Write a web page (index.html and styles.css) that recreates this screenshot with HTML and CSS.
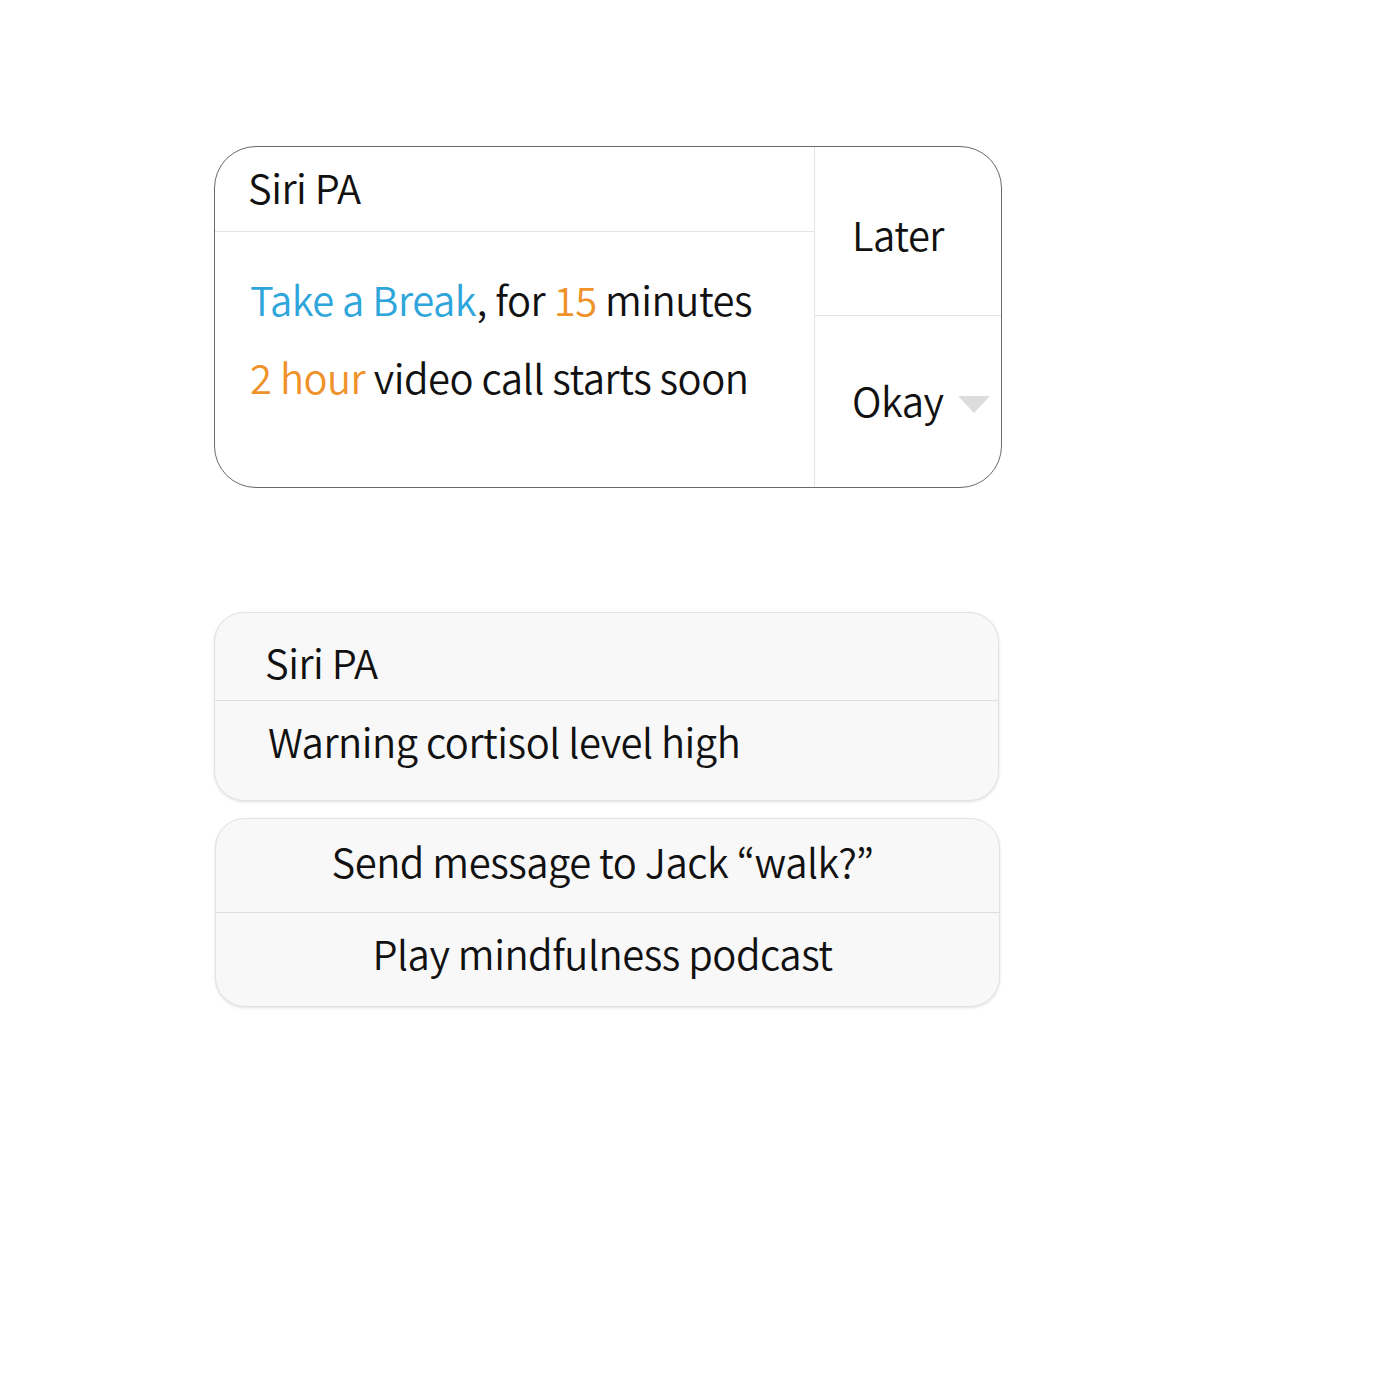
FILE: index.html
```html
<!DOCTYPE html>
<html>
<head>
<meta charset="utf-8">
<link rel="stylesheet" href="styles.css">
</head>
<body>
<div class="page">
  <div class="alert">
    <div class="alert-main">
      <div class="alert-title">Siri PA</div>
      <div class="alert-body">
        <div class="line"><span class="blue">Take a Break</span>, for <span class="orange">15</span> minutes</div>
        <div class="line"><span class="orange">2 hour</span> video call starts soon</div>
      </div>
    </div>
    <div class="alert-actions">
      <div class="action action-later">Later</div>
      <div class="action action-okay">Okay <span class="caret"></span></div>
    </div>
  </div>

  <div class="sheet sheet-warning">
    <div class="sheet-title">Siri PA</div>
    <div class="sheet-text">Warning cortisol level high</div>
  </div>

  <div class="sheet sheet-options">
    <div class="option">Send message to Jack “walk?”</div>
    <div class="option">Play mindfulness podcast</div>
  </div>
</div>
</body>
</html>
```

FILE: styles.css
```css
html, body {
  margin: 0;
  padding: 0;
  background: #ffffff;
}
body {
  font-family: "Noto Sans CJK KR", "Noto Sans", sans-serif;
  font-weight: 350;
  letter-spacing: -0.5px;
  color: #111;
  width: 1400px;
  height: 1400px;
}
.page {
  padding: 146px 0 0 214px;
  display: flex;
  flex-direction: column;
  align-items: flex-start;
}
.alert {
  width: 788px;
  height: 342px;
  border: 1px solid #6a6a6a;
  border-radius: 42px;
  display: flex;
  box-sizing: border-box;
  overflow: hidden;
}
.alert-main {
  width: 599px;
  border-right: 1px solid #e3e3e3;
  display: flex;
  flex-direction: column;
}
.alert-title {
  height: 85px;
  border-bottom: 1px solid #e3e3e3;
  font-size: 40px;
  line-height: 80px;
  padding-left: 33px;
  box-sizing: border-box;
}
.alert-body {
  padding: 39px 0 0 35px;
  display: flex;
  flex-direction: column;
  gap: 22px;
}
.line {
  font-size: 40px;
  line-height: 56px;
  white-space: nowrap;
}
.blue { color: #2ea6dc; }
.orange { color: #f0922a; }
.alert-actions {
  flex: 1;
  display: flex;
  flex-direction: column;
}
.action {
  font-size: 40px;
  padding-left: 37px;
  display: flex;
  align-items: center;
  box-sizing: border-box;
}
.action-later {
  height: 169px;
  border-bottom: 1px solid #e3e3e3;
  padding-top: 6px;
}
.action-okay {
  flex: 1;
  padding-bottom: 4px;
}
.caret {
  display: inline-block;
  width: 0;
  height: 0;
  margin-left: 14px;
  margin-top: 10px;
  border-left: 16px solid transparent;
  border-right: 16px solid transparent;
  border-top: 17px solid #dcdcdc;
}
.sheet {
  width: 785px;
  background: #f8f8f8;
  border: 1px solid #e2e2e2;
  border-radius: 30px;
  box-shadow: 0 1px 3px rgba(0,0,0,0.12);
  box-sizing: border-box;
  overflow: hidden;
}
.sheet-warning {
  margin-top: 124px;
  height: 189px;
}
.sheet-title {
  height: 88px;
  border-bottom: 1px solid #dedede;
  font-size: 40px;
  line-height: 98px;
  padding-left: 50px;
  box-sizing: border-box;
}
.sheet-text {
  font-size: 40px;
  line-height: 80px;
  padding-left: 53px;
}
.sheet-options {
  margin-top: 17px;
  margin-left: 1px;
  height: 189px;
  display: flex;
  flex-direction: column;
}
.option {
  font-size: 40px;
  text-align: center;
  height: 94px;
  line-height: 84px;
  padding-right: 10px;
}
.option + .option {
  border-top: 1px solid #dedede;
  line-height: 80px;
}
```
